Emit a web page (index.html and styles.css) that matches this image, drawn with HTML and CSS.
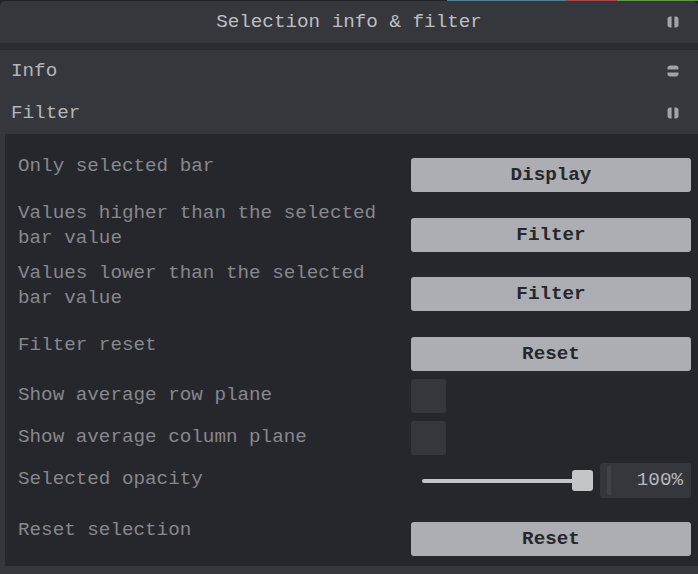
FILE: index.html
```html
<!DOCTYPE html>
<html lang="en">
<head>
<meta charset="utf-8">
<title>Selection info &amp; filter</title>
<link rel="stylesheet" href="styles.css">
</head>
<body>
<div class="topline"></div>
<div class="panel">
  <div class="title">
    <span class="title-spacer"></span>
    <span class="title-text">Selection info &amp; filter</span>
    <svg class="icon icon-title" viewBox="0 0 12 12" aria-hidden="true"><path d="M4.6 0.5H3.2A2.7 2.7 0 0 0 0.5 3.2V8.8A2.7 2.7 0 0 0 3.2 11.5H4.6Z"/><path d="M7.4 0.5H8.8A2.7 2.7 0 0 1 11.5 3.2V8.8A2.7 2.7 0 0 1 8.8 11.5H7.4Z"/></svg>
  </div>
  <div class="folder-head">
    <span>Info</span>
    <svg class="icon" viewBox="0 0 12 12" aria-hidden="true"><path d="M0.5 4.6V3.2A2.7 2.7 0 0 1 3.2 0.5H8.8A2.7 2.7 0 0 1 11.5 3.2V4.6Z"/><path d="M0.5 7.4V8.8A2.7 2.7 0 0 0 3.2 11.5H8.8A2.7 2.7 0 0 0 11.5 8.8V7.4Z"/></svg>
  </div>
  <div class="folder-head">
    <span>Filter</span>
    <svg class="icon" viewBox="0 0 12 12" aria-hidden="true"><path d="M4.6 0.5H3.2A2.7 2.7 0 0 0 0.5 3.2V8.8A2.7 2.7 0 0 0 3.2 11.5H4.6Z"/><path d="M7.4 0.5H8.8A2.7 2.7 0 0 1 11.5 3.2V8.8A2.7 2.7 0 0 1 8.8 11.5H7.4Z"/></svg>
  </div>
  <div class="children">
    <div class="row row--first">
      <div class="label">Only selected bar</div>
      <div class="widget"><button class="btn">Display</button></div>
    </div>
    <div class="row">
      <div class="label">Values higher than the selected bar value</div>
      <div class="widget widget--low"><button class="btn">Filter</button></div>
    </div>
    <div class="row">
      <div class="label">Values lower than the selected bar value</div>
      <div class="widget widget--lower"><button class="btn">Filter</button></div>
    </div>
    <div class="row row--spaced">
      <div class="label">Filter reset</div>
      <div class="widget"><button class="btn">Reset</button></div>
    </div>
    <div class="row row--check">
      <div class="label label--check">Show average row plane</div>
      <div class="widget widget--flat"><span class="checkbox"></span></div>
    </div>
    <div class="row row--check">
      <div class="label label--check">Show average column plane</div>
      <div class="widget widget--flat"><span class="checkbox"></span></div>
    </div>
    <div class="row row--check">
      <div class="label label--slider">Selected opacity</div>
      <div class="widget widget--flat slider-wrap">
        <div class="slider">
          <span class="track"></span>
          <span class="thumb"></span>
        </div>
        <div class="number">
          <span class="number-bar"></span>
          <span class="number-value">100%</span>
        </div>
      </div>
    </div>
    <div class="row row--last">
      <div class="label">Reset selection</div>
      <div class="widget"><button class="btn">Reset</button></div>
    </div>
  </div>
</div>
</body>
</html>
```

FILE: styles.css
```css
html, body {
  margin: 0;
  padding: 0;
  background: #1f2329;
}

body {
  font-family: "Liberation Mono", "DejaVu Sans Mono", monospace;
  font-size: 19.25px;
  line-height: 25px;
  width: 698px;
  height: 574px;
  overflow: hidden;
}

.topline {
  height: 1px;
  background: linear-gradient(to right, #1f2329 0, #1f2329 447px, #4f7f96 447px, #4f7f96 566px, #a64545 566px, #a64545 617px, #5d9b42 617px);
}

.panel {
  background: #36373c;
  border-radius: 5px 5px 0 0;
  padding-bottom: 8px;
}

.title {
  display: grid;
  grid-template-columns: 1fr auto 1fr;
  align-items: center;
  height: 42px;
  border-bottom: 7px solid #2b2c31;
  color: #bebfc3;
}

.title-text {
  white-space: nowrap;
}

.icon-title {
  justify-self: end;
}

.icon {
  width: 12px;
  height: 12px;
  margin-right: 19px;
  fill: #a2a3a7;
  flex: none;
}

.folder-head {
  display: flex;
  align-items: center;
  justify-content: space-between;
  height: 42px;
  padding-left: 11px;
  color: #b4b5b9;
}

.children {
  margin-left: 5px;
  background: #26272c;
  padding: 18px 0 10px;
}

.row {
  display: flex;
  align-items: flex-start;
  padding: 0 7px 0 13px;
  margin-top: 7px;
}

.row--first {
  margin-top: 0;
}

.row--spaced {
  margin-top: 20px;
}

.row--check {
  margin-top: 8px;
}

.row--last {
  margin-top: 18px;
}

.label {
  flex: 1 1 auto;
  min-width: 0;
  padding: 2px 12px 0 0;
  color: #87888c;
}

.label--check {
  margin-top: 2px;
}

.label--slider {
  margin-top: 2px;
}

.widget {
  flex: 0 0 280px;
  width: 280px;
  margin-top: 6px;
}

.widget--low {
  margin-top: 19px;
}

.widget--lower {
  margin-top: 18px;
}

.widget--flat {
  margin-top: 0;
}

.btn {
  display: block;
  width: 100%;
  height: 34px;
  border: none;
  border-radius: 3px;
  background: #acaeb3;
  color: #26272c;
  font-family: inherit;
  font-size: inherit;
  font-weight: bold;
  line-height: 34px;
  padding: 0;
  text-align: center;
}

.checkbox {
  display: block;
  width: 35px;
  height: 34px;
  border-radius: 3px;
  background: #36373c;
}

.slider-wrap {
  display: flex;
  align-items: center;
  gap: 6px;
}

.slider {
  flex: 1 1 auto;
  display: flex;
  align-items: center;
  padding: 0 1px 0 11px;
  height: 35px;
}

.track {
  flex: 1 1 auto;
  height: 4px;
  border-radius: 2px;
  background: #c4c5c9;
}

.thumb {
  flex: none;
  width: 21px;
  height: 21px;
  border-radius: 3px;
  background: #c4c5c9;
  margin-left: -3px;
}

.number {
  flex: 0 0 91px;
  height: 35px;
  box-sizing: border-box;
  display: flex;
  align-items: center;
  padding: 3px 8px 3px 7px;
  border-radius: 3px;
  background: #36373c;
}

.number-bar {
  align-self: stretch;
  width: 4px;
  border-radius: 1px;
  background: #414247;
}

.number-value {
  flex: 1 1 auto;
  text-align: right;
  color: #b7b8bc;
}
```
